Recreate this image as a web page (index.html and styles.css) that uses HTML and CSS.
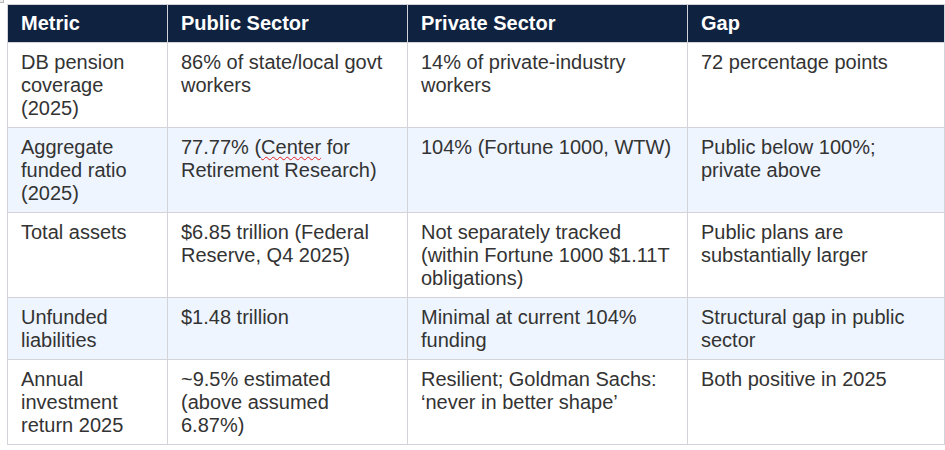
FILE: index.html
```html
<!DOCTYPE html>
<html>
<head>
<meta charset="utf-8">
<link rel="stylesheet" href="styles.css">
</head>
<body>
<div class="corner"></div>
<table class="grid">
  <colgroup>
    <col class="c1"><col class="c2"><col class="c3"><col class="c4">
  </colgroup>
  <thead>
    <tr><th>Metric</th><th>Public Sector</th><th>Private Sector</th><th>Gap</th></tr>
  </thead>
  <tbody>
    <tr>
      <td>DB pension coverage (2025)</td>
      <td>86% of state/local govt workers</td>
      <td>14% of private-industry workers</td>
      <td>72 percentage points</td>
    </tr>
    <tr class="alt">
      <td>Aggregate funded ratio (2025)</td>
      <td>77.77% (<span class="spell">Center</span> for Retirement Research)</td>
      <td>104% (Fortune 1000, WTW)</td>
      <td>Public below 100%; private above</td>
    </tr>
    <tr>
      <td>Total assets</td>
      <td>$6.85 trillion (Federal Reserve, Q4 2025)</td>
      <td>Not separately tracked (within Fortune 1000 $1.11T obligations)</td>
      <td>Public plans are substantially larger</td>
    </tr>
    <tr class="alt">
      <td>Unfunded liabilities</td>
      <td>$1.48 trillion</td>
      <td>Minimal at current 104% funding</td>
      <td>Structural gap in public sector</td>
    </tr>
    <tr>
      <td>Annual investment return 2025</td>
      <td>~9.5% estimated (above assumed 6.87%)</td>
      <td>Resilient; Goldman Sachs: ‘never in better shape’</td>
      <td>Both positive in 2025</td>
    </tr>
  </tbody>
</table>
</body>
</html>
```
FILE: styles.css
```css
html, body {
  margin: 0;
  padding: 0;
  background: #ffffff;
}
body {
  font-family: "Liberation Sans", Arial, sans-serif;
  font-size: 20px;
  color: #333333;
  position: relative;
}
.corner {
  position: absolute;
  left: 0;
  top: 0;
  width: 3px;
  height: 2px;
  background: #ececec;
  border-right: 1px solid #b8b8b8;
  border-bottom: 1px solid #b8b8b8;
}
.grid {
  margin: 4px 0 0 7px;
  width: 937px;
  border-collapse: collapse;
  table-layout: fixed;
}
.c1 { width: 160px; }
.c2 { width: 240px; }
.c3 { width: 280px; }
.c4 { width: 257px; }
.grid th, .grid td {
  border: 1px solid #d2d4da;
  padding: 8px 13px 7px 13px;
  text-align: left;
  vertical-align: top;
  line-height: 23px;
  font-weight: normal;
}
.grid th {
  padding: 7px 13px 7px 13px;
  background: #0f2341;
  color: #ffffff;
  font-weight: bold;
}
.grid tr.alt td {
  background: #eef5ff;
}
.spell {
  text-decoration: underline wavy #e02020;
  text-decoration-thickness: 1px;
  text-underline-offset: 2px;
}
```
